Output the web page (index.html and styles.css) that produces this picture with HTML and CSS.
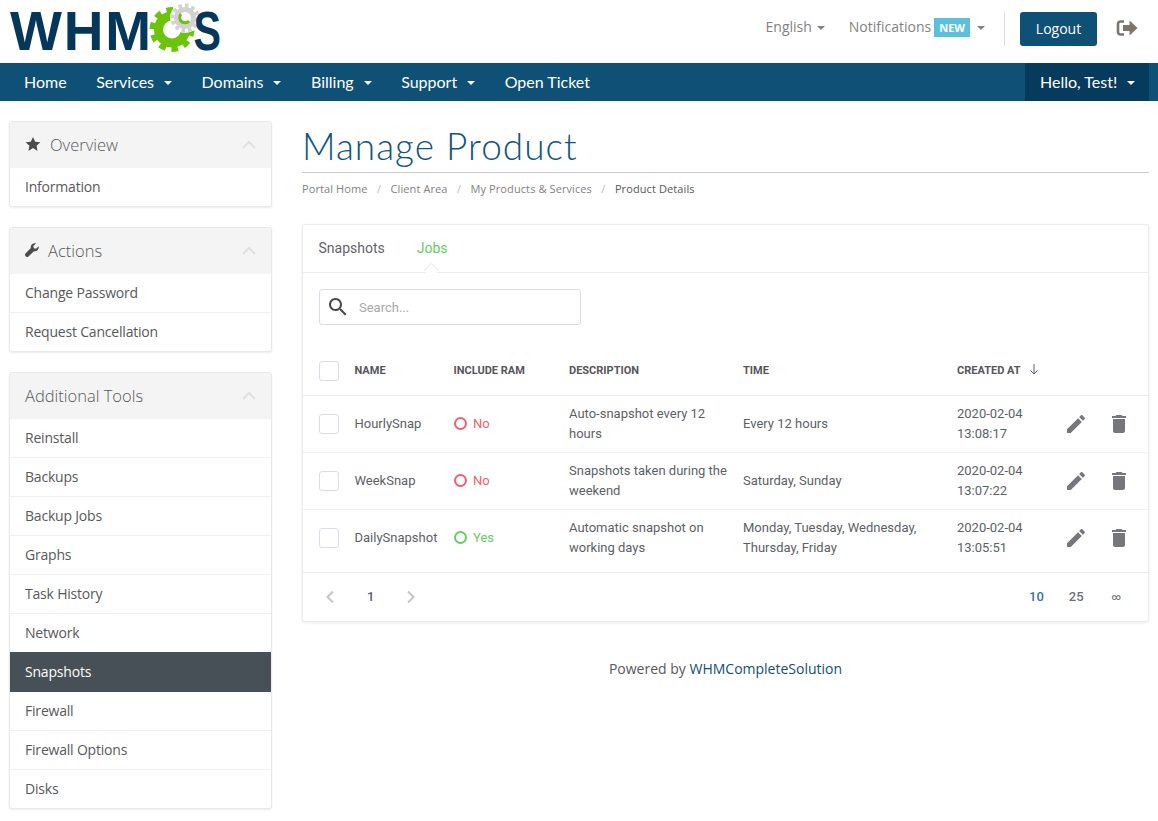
FILE: index.html
```html
<!DOCTYPE html>
<html lang="en">
<head>
<meta charset="utf-8">
<title>Manage Product</title>
<link rel="stylesheet" href="styles.css">
</head>
<body>
<header class="topbar">
  <a class="logo" href="#">
    <svg class="logo-svg" width="240" height="63" viewBox="0 0 240 63">
      <text class="logo-text" x="10" y="50" textLength="141">WHM</text>
      <circle class="gear-green-teeth" cx="172" cy="29.5" r="19.5"/>
      <circle class="gear-green-ring" cx="172" cy="29.5" r="13.5"/>
      <path class="logo-cut" d="M176 0H200V30L188 31H176Z"/>
      <circle class="logo-halo" cx="185" cy="18" r="15"/>
      <circle class="gear-gray-teeth" cx="185" cy="18" r="12.5"/>
      <circle class="gear-gray-ring" cx="185" cy="18" r="8.5"/>
      <path class="gear-wrench" d="M181 14a5 5 0 0 0 8 7"/>
      <text class="logo-text" x="193.5" y="50" textLength="27.5" lengthAdjust="spacingAndGlyphs">S</text>
    </svg>
  </a>
  <div class="top-actions">
    <a class="top-link top-english" href="#">English<span class="caret caret-gray"></span></a>
    <a class="top-link" href="#">Notifications<span class="badge-new">NEW</span><span class="caret caret-gray"></span></a>
    <span class="top-divider"></span>
    <a class="btn-logout" href="#">Logout</a>
    <svg class="signout-icon" width="22" height="18" viewBox="0 0 22 18">
      <path d="M8 2.500H4.500A2.500 2.500 0 0 0 2 5v8a2.500 2.500 0 0 0 2.500 2.500H8" fill="none" stroke="currentColor" stroke-width="2.6"/>
      <path d="M7 6h6.500V1.500L21.500 9l-8 7.500V12H7z" fill="currentColor"/>
    </svg>
  </div>
</header>

<nav class="navbar">
  <ul class="nav-list">
    <li class="nav-item">Home</li>
    <li class="nav-item">Services<span class="caret caret-white"></span></li>
    <li class="nav-item">Domains<span class="caret caret-white"></span></li>
    <li class="nav-item">Billing<span class="caret caret-white"></span></li>
    <li class="nav-item">Support<span class="caret caret-white"></span></li>
    <li class="nav-item">Open Ticket</li>
  </ul>
  <div class="nav-user">Hello, Test!<span class="caret caret-white"></span></div>
</nav>

<div class="page">
  <aside class="sidebar">
    <section class="side-panel">
      <div class="side-head">
        <svg class="side-icon side-star" width="16" height="16" viewBox="0 0 24 24"><path d="M12 1.500l3.300 7 7.700 1-5.600 5.300 1.400 7.700L12 18l-6.800 4.500 1.400-7.700L1 9.500l7.700-1z"/></svg>
        <span>Overview</span>
        <svg class="side-chevron" width="14" height="9" viewBox="0 0 14 9"><path d="M1 8l6-6 6 6" /></svg>
      </div>
      <a class="side-item" href="#">Information</a>
    </section>
    <section class="side-panel">
      <div class="side-head">
        <svg class="side-icon side-wrench" width="14" height="14" viewBox="0 0 14 14"><path d="M13.600 3.200c.4 1.500 0 3-1.100 4-1 1-2.300 1.300-3.600 1L3.500 13.500c-.7.700-1.900.7-2.600 0l-.4-.4c-.7-.7-.7-1.900 0-2.600l5.300-5.400c-.3-1.300 0-2.600 1-3.600C8 .4 9.500 0 11 .4L8.300 3.100l.5 2.200 2.200.5z"/></svg>
        <span>Actions</span>
        <svg class="side-chevron" width="14" height="9" viewBox="0 0 14 9"><path d="M1 8l6-6 6 6" /></svg>
      </div>
      <a class="side-item" href="#">Change Password</a>
      <a class="side-item" href="#">Request Cancellation</a>
    </section>
    <section class="side-panel">
      <div class="side-head">
        <span>Additional Tools</span>
        <svg class="side-chevron" width="14" height="9" viewBox="0 0 14 9"><path d="M1 8l6-6 6 6" /></svg>
      </div>
      <a class="side-item" href="#">Reinstall</a>
      <a class="side-item" href="#">Backups</a>
      <a class="side-item" href="#">Backup Jobs</a>
      <a class="side-item" href="#">Graphs</a>
      <a class="side-item" href="#">Task History</a>
      <a class="side-item" href="#">Network</a>
      <a class="side-item is-active" href="#">Snapshots</a>
      <a class="side-item" href="#">Firewall</a>
      <a class="side-item" href="#">Firewall Options</a>
      <a class="side-item" href="#">Disks</a>
    </section>
  </aside>

  <main class="main">
    <h1 class="page-title">Manage Product</h1>
    <ol class="breadcrumb">
      <li>Portal Home</li>
      <li>Client Area</li>
      <li>My Products &amp; Services</li>
      <li class="crumb-current">Product Details</li>
    </ol>

    <section class="card">
      <div class="tabs">
        <span class="tab">Snapshots</span>
        <span class="tab tab-active">Jobs</span>
      </div>
      <div class="search-wrap">
        <div class="search-box">
          <svg class="search-icon" width="24" height="24" viewBox="0 0 24 24"><path d="M15.500 14h-.79l-.28-.27C15.410 12.590 16 11.110 16 9.500 16 5.910 13.090 3 9.500 3S3 5.910 3 9.500 5.910 16 9.500 16c1.610 0 3.090-.59 4.230-1.570l.27.28v.79l5 4.990L20.490 19l-4.990-5zm-6 0C7.010 14 5 11.990 5 9.500S7.010 5 9.500 5 14 7.010 14 9.500 11.990 14 9.500 14z"/></svg>
          <span class="search-placeholder">Search...</span>
        </div>
      </div>
      <table class="jobs">
        <colgroup>
          <col class="c-check"><col class="c-name"><col class="c-ram"><col class="c-desc"><col class="c-time"><col class="c-created"><col class="c-actions">
        </colgroup>
        <thead>
          <tr>
            <th><span class="check"></span></th>
            <th>Name</th>
            <th>Include RAM</th>
            <th>Description</th>
            <th>Time</th>
            <th>Created at
              <svg class="sort-arrow" width="10" height="12" viewBox="0 0 10 12"><path d="M5 1v10M1.500 7.500L5 11l3.500-3.500"/></svg>
            </th>
            <th></th>
          </tr>
        </thead>
        <tbody>
          <tr class="row-a">
            <td><span class="check"></span></td>
            <td>HourlySnap</td>
            <td><span class="status status-no"><i class="dot"></i>No</span></td>
            <td>Auto-snapshot every 12 hours</td>
            <td>Every 12 hours</td>
            <td>2020-02-04 13:08:17</td>
            <td>
              <div class="row-actions">
                <svg width="24" height="24" viewBox="0 0 24 24"><path d="M3 17.250V21h3.750L17.810 9.940l-3.750-3.750L3 17.250zM20.710 7.040c.39-.39.39-1.020 0-1.410l-2.340-2.340c-.39-.39-1.020-.39-1.410 0l-1.830 1.830 3.750 3.750 1.830-1.830z"/></svg>
                <svg width="24" height="24" viewBox="0 0 24 24"><path d="M6 19c0 1.100.9 2 2 2h8c1.100 0 2-.9 2-2V7H6v12zM19 4h-3.500l-1-1h-5l-1 1H5v2h14V4z"/></svg>
              </div>
            </td>
          </tr>
          <tr class="row-a">
            <td><span class="check"></span></td>
            <td>WeekSnap</td>
            <td><span class="status status-no"><i class="dot"></i>No</span></td>
            <td>Snapshots taken during the weekend</td>
            <td>Saturday, Sunday</td>
            <td>2020-02-04 13:07:22</td>
            <td>
              <div class="row-actions">
                <svg width="24" height="24" viewBox="0 0 24 24"><path d="M3 17.250V21h3.750L17.810 9.940l-3.750-3.750L3 17.250zM20.710 7.040c.39-.39.39-1.020 0-1.410l-2.340-2.340c-.39-.39-1.020-.39-1.410 0l-1.830 1.830 3.750 3.750 1.830-1.830z"/></svg>
                <svg width="24" height="24" viewBox="0 0 24 24"><path d="M6 19c0 1.100.9 2 2 2h8c1.100 0 2-.9 2-2V7H6v12zM19 4h-3.500l-1-1h-5l-1 1H5v2h14V4z"/></svg>
              </div>
            </td>
          </tr>
          <tr class="row-b">
            <td><span class="check"></span></td>
            <td>DailySnapshot</td>
            <td><span class="status status-yes"><i class="dot"></i>Yes</span></td>
            <td>Automatic snapshot on working days</td>
            <td>Monday, Tuesday, Wednesday, Thursday, Friday</td>
            <td>2020-02-04 13:05:51</td>
            <td>
              <div class="row-actions">
                <svg width="24" height="24" viewBox="0 0 24 24"><path d="M3 17.250V21h3.750L17.810 9.940l-3.750-3.750L3 17.250zM20.710 7.040c.39-.39.39-1.020 0-1.410l-2.340-2.340c-.39-.39-1.020-.39-1.410 0l-1.830 1.830 3.750 3.750 1.830-1.830z"/></svg>
                <svg width="24" height="24" viewBox="0 0 24 24"><path d="M6 19c0 1.100.9 2 2 2h8c1.100 0 2-.9 2-2V7H6v12zM19 4h-3.500l-1-1h-5l-1 1H5v2h14V4z"/></svg>
              </div>
            </td>
          </tr>
        </tbody>
      </table>
      <div class="pager">
        <div class="pager-pages">
          <svg class="pager-arrow" width="10" height="14" viewBox="0 0 10 14"><path d="M8 1.500L2.500 7 8 12.500"/></svg>
          <span class="pager-num">1</span>
          <svg class="pager-arrow" width="10" height="14" viewBox="0 0 10 14"><path d="M2 1.500L7.500 7 2 12.500"/></svg>
        </div>
        <div class="pager-sizes">
          <span class="size size-active">10</span>
          <span class="size">25</span>
          <span class="size size-all">∞</span>
        </div>
      </div>
    </section>

    <footer class="powered">Powered by <a href="#">WHMCompleteSolution</a></footer>
  </main>
</div>
</body>
</html>
```
FILE: styles.css
```css
* { box-sizing: border-box; }
html, body { margin: 0; padding: 0; }
body {
  background: #fff;
  color: #58595b;
  font-family: "Open Sans", "Liberation Sans", sans-serif;
  font-size: 14px;
  overflow-x: hidden;
}
a { color: inherit; text-decoration: none; }
ul, ol { list-style: none; margin: 0; padding: 0; }

/* top bar */
.topbar {
  height: 63px;
  display: flex;
  justify-content: space-between;
  align-items: flex-start;
  padding-right: 20px;
}
.logo { display: block; }
.logo-svg { display: block; }
.logo-text { font-family: "Liberation Sans", sans-serif; font-weight: 700; font-size: 55px; fill: #04375a; }
.gear-green-teeth { fill: none; stroke: #6cc40a; stroke-width: 6; stroke-dasharray: 6.500 5.750; }
.gear-green-ring { fill: none; stroke: #6cc40a; stroke-width: 9; }
.logo-cut { fill: #fff; }
.logo-halo { fill: #fff; }
.gear-gray-teeth { fill: none; stroke: #d2d2d2; stroke-width: 4; stroke-dasharray: 3.500 3; }
.gear-gray-ring { fill: none; stroke: #d2d2d2; stroke-width: 5; }
.gear-wrench { fill: none; stroke: #6cc40a; stroke-width: 3; }
.top-actions { display: flex; align-items: flex-start; height: 46px; margin-top: 12px; }
.top-link { color: #828282; font-size: 14px; display: flex; align-items: center; height: 29px; }
.top-english { margin-right: 24px; }
.badge-new {
  background: #5bc0de;
  color: #fff;
  font-size: 11px;
  font-weight: 700;
  height: 19px;
  line-height: 19px;
  padding: 0 5px;
  margin: 2px 2px 0 3px;
}
.caret { display: inline-block; width: 0; height: 0; border-left: 4px solid transparent; border-right: 4px solid transparent; }
.caret-gray { border-top: 4px solid #828282; margin-left: 5px; margin-top: 3px; }
.top-divider { width: 1px; height: 34px; background: #ddd; margin: 0 15px 0 19px; }
.btn-logout {
  width: 77px;
  height: 34px;
  line-height: 34px;
  text-align: center;
  background: #0f5077;
  color: #fff;
  font-size: 14px;
  border-radius: 3px;
}
.signout-icon { color: #7c746d; margin-left: 19px; margin-top: 7px; }

/* nav */
.navbar {
  height: 38px;
  background: #0f5077;
  display: flex;
  justify-content: space-between;
  color: #fff;
  font-family: Lato, "Liberation Sans", sans-serif;
  font-size: 16px;
}
.nav-list { display: flex; padding-left: 9px; }
.nav-item { padding: 0 14.500px 2px 15px; display: flex; align-items: center; }
.nav-user {
  width: 124px;
  margin-right: 9px;
  background: #073b5e;
  padding: 0 0 2px 15px;
  display: flex;
  align-items: center;
}
.caret-white { border-top: 4px solid #fff; margin-left: 10px; margin-top: 3px; }

/* page */
.page {
  display: flex;
  align-items: flex-start;
  padding: 20px 9px 13px 9px;
}
.sidebar { width: 263px; margin-right: 30px; flex: none; display: flex; flex-direction: column; gap: 20px; }
.side-panel {
  border: 1px solid #e9e9e9;
  border-radius: 3px;
  box-shadow: 0 1px 2px rgba(0,0,0,.08);
  background: #fff;
  overflow: hidden;
}
.side-head {
  height: 46px;
  background: #f4f4f4;
  display: flex;
  align-items: center;
  padding: 0 15px 2px;
  font-size: 16.500px;
  font-weight: 300;
  color: #58595b;
}
.side-icon { fill: #4c4c4c; flex: none; }
.side-star { margin-right: 9px; }
.side-wrench { margin-right: 9px; }
.side-chevron { margin-left: auto; fill: none; stroke: #e0e0e0; stroke-width: 2; }
.side-item {
  display: block;
  height: 39px;
  line-height: 38px;
  padding: 0 15px;
  font-size: 14px;
  letter-spacing: -.2px;
  color: #58595b;
  border-bottom: 1px solid #f0f0f0;
}
.side-item:last-child { border-bottom: 0; height: 38px; }
.side-item.is-active {
  background: #475056;
  color: #fff;
  height: 40px;
  line-height: 40px;
  margin-top: -1px;
  border-bottom: 0;
}

/* main */
.main { flex: 1; min-width: 0; }
.page-title {
  margin: 0;
  height: 52px;
  border-bottom: 1px solid #ccc;
  font-family: Lato, "Liberation Sans", sans-serif;
  font-size: 37px;
  font-weight: 300;
  letter-spacing: 1px;
  line-height: 49px;
  color: #0f5581;
}
.breadcrumb { display: flex; font-size: 11px; letter-spacing: .1px; color: #828282; margin-top: 8px; height: 16px; line-height: 16px; }
.breadcrumb li + li::before { content: "/"; color: #bbb; padding: 0 9.400px; }
.crumb-current { color: #58595b; }

.card {
  margin-top: 27px;
  border: 1px solid #ebebf0;
  border-radius: 3px;
  box-shadow: 0 1px 3px rgba(0,0,0,.09);
  background: #fff;
  font-family: Roboto, "Liberation Sans", sans-serif;
}
.tabs {
  height: 48px;
  border-bottom: 1px solid #ebebf0;
  display: flex;
  align-items: center;
  padding: 0 0 2px 15.500px;
  gap: 32px;
  font-size: 14px;
  color: #636369;
}
.tab { position: relative; line-height: 46px; }
.tab-active { color: #66cc66; }
.tab-active::after {
  content: "";
  position: absolute;
  left: 9px;
  bottom: -5px;
  width: 10px;
  height: 10px;
  background: #fff;
  border-left: 1px solid #ebebf0;
  border-top: 1px solid #ebebf0;
  transform: rotate(45deg);
}
.search-wrap { padding: 16px 16px 20px; }
.search-box {
  width: 262px;
  height: 36px;
  border: 1px solid #dcdce6;
  border-radius: 3px;
  display: flex;
  align-items: center;
  padding-left: 6px;
}
.search-icon { fill: #46484d; flex: none; }
.search-placeholder { color: #a8a8ac; font-size: 13px; margin-left: 9px; }

.jobs { width: 100%; table-layout: fixed; border-collapse: collapse; font-size: 13px; line-height: 20px; color: #5d5f66; }
.c-check { width: 43px; }
.c-name { width: 99px; }
.c-ram { width: 115px; }
.c-desc { width: 174px; }
.c-time { width: 214px; }
.c-created { width: 108px; }
.jobs th, .jobs td { padding: 0 6px 0 9px; text-align: left; vertical-align: middle; }
.jobs th {
  height: 50px;
  padding-top: 2px;
  font-size: 11px;
  font-weight: 700;
  text-transform: uppercase;
  color: #55565c;
  border-bottom: 1px solid #ebebf0;
}
.jobs th:first-child, .jobs td:first-child { padding-left: 16px; padding-right: 0; }
.jobs th:nth-child(2), .jobs td:nth-child(2), .jobs th:nth-child(3), .jobs td:nth-child(3) { padding-left: 8.500px; }
.jobs td { height: 57px; border-bottom: 1px solid #f0f0f4; }
.jobs td:last-child { padding-left: 8px; padding-right: 0; }
.jobs .row-b td { height: 63px; padding-bottom: 6px; border-bottom: 1px solid #ebebf0; }
.check { display: block; width: 20px; height: 20px; border: 1px solid #dcdce6; border-radius: 3px; background: #fff; }
.sort-arrow { fill: none; stroke: #5a5a8c; stroke-width: 1; margin-left: 6px; vertical-align: -1px; }
.status { display: flex; align-items: center; font-size: 13px; }
.status-no { color: #f2606c; }
.status-yes { color: #66cc66; }
.dot { width: 13px; height: 13px; border-radius: 50%; border: 2px solid currentColor; margin-right: 6.500px; flex: none; }
.row-actions { display: flex; gap: 19px; }
.row-actions svg { fill: #76777d; flex: none; }

.pager {
  height: 48px;
  display: flex;
  justify-content: space-between;
  align-items: center;
  padding: 0 27px 0 22px;
}
.pager-pages { display: flex; align-items: center; gap: 32px; }
.pager-arrow { fill: none; stroke: #c6c6c8; stroke-width: 2; }
.pager-num { font-size: 13px; font-weight: 500; color: #54627a; }
.pager-sizes { display: flex; gap: 25px; font-size: 13px; font-weight: 500; color: #6e7077; align-items: center; }
.size-active { color: #3a6fb0; }
.size-all { font-size: 9px; margin-left: 3px; }

.powered { text-align: center; margin-top: 37px; font-size: 14px; line-height: 20px; color: #58595b; }
.powered a { color: #0f5077; }
```
